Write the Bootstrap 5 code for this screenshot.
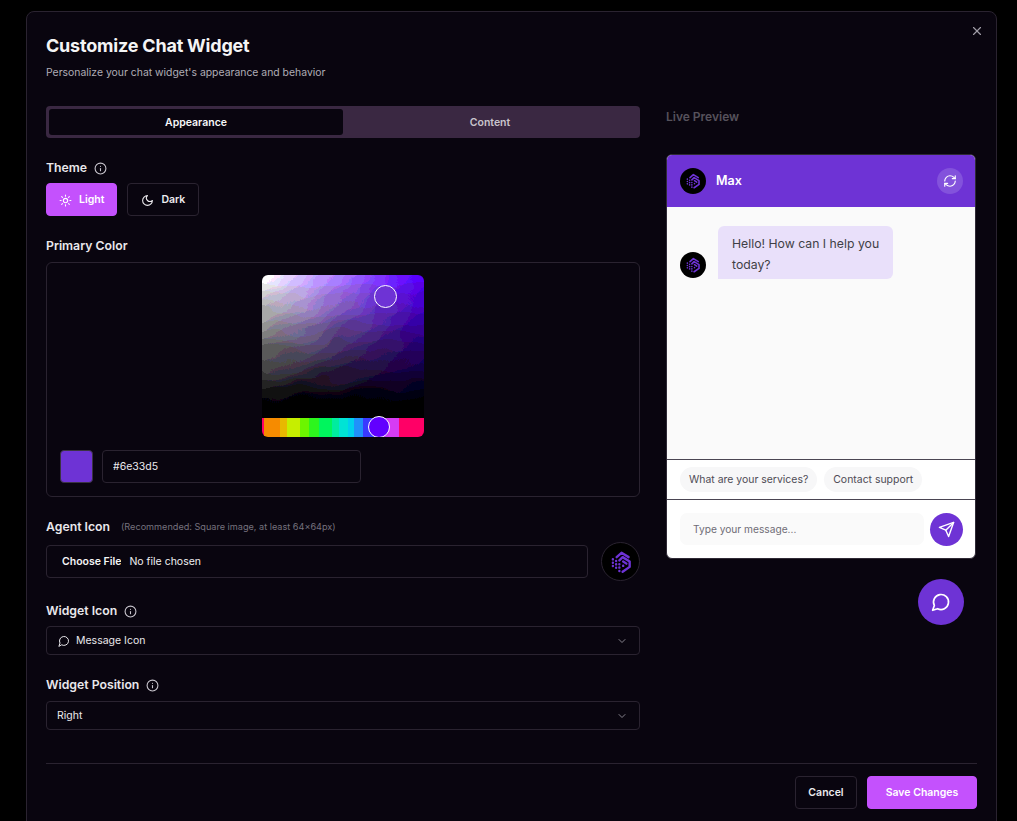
<!DOCTYPE html>
<html lang="en">
<head>
    <meta charset="UTF-8">
    <meta name="viewport" content="width=device-width, initial-scale=1.0">
    <title>Customize Chat Widget</title>
    <link href="https://cdn.jsdelivr.net/npm/bootstrap@5.3.0/dist/css/bootstrap.min.css" rel="stylesheet">
    <style>
        html, body { height: 100%; overflow: hidden; }
        body { background: #000; font-family: Inter, "Liberation Sans", sans-serif; color: #f4f4f5; padding: 11px 20px 0 26px; }
        svg.ico { fill: none; stroke: currentColor; stroke-width: 2; stroke-linecap: round; stroke-linejoin: round; flex: none; }
        .dlg { position: relative; width: 971px; height: 830px; background: #09050f; border: 1px solid #2a2330; border-radius: 8px; padding: 19px; }
        .dlg-close { position: absolute; top: 12px; right: 12px; width: 14px; height: 14px; padding: 0; background: none; border: 0; color: #a09ca6; line-height: 0; }
        .dlg-title { font-size: 18px; line-height: 28px; font-weight: 700; margin: 0; letter-spacing: -.2px; margin-top: 1px; }
        .dlg-sub { font-size: 10.42px; line-height: 16px; color: #b0adb6; margin: 5px 0 0; }
        .dlg-main { display: grid; grid-template-columns: 594px 311px; column-gap: 26px; margin-top: 25px; }
        .tabs-bar { display: flex; height: 32px; padding: 3px; background: #3a2842; border-radius: 4px; }
        .tab-item { flex: 1; border: 0; background: none; border-radius: 3px; color: #c9c4cd; font-size: 10.5px; font-weight: 600; padding: 1px 0 0; }
        .tab-item.on { background: #09050f; color: #f7f7f8; }
        .fld-label { display: flex; align-items: center; gap: 7px; font-size: 12.25px; line-height: 18px; font-weight: 600; color: #e9e8ec; margin: 0; }
        .fld-label svg { color: #c9c6ce; }
        .fld-note { font-size: 9.15px; font-weight: 400; color: #76727e; margin-left: 4px; }
        .lbl-theme { margin-top: 21px; }
        .lbl-color { margin-top: 21px; }
        .lbl-agent { margin-top: 21px; }
        .lbl-widget { margin-top: 21px; }
        .lbl-pos { margin-top: 21px; }
        .theme-row { display: flex; gap: 10px; margin-top: 6px; }
        .theme-btn { display: inline-flex; align-items: center; gap: 7px; height: 33px; padding: 1px 12px 0; font-size: 10.5px; font-weight: 600; border-radius: 4px; border: 1px solid #2a2330; background: transparent; color: #eceaee; }
        .theme-btn.dark-opt { padding: 1px 13px 0; }
        .theme-btn.on { background: #c451fd; border-color: #c451fd; color: #fff; }
        .color-box { height: 235px; margin-top: 7px; border: 1px solid #2a2330; border-radius: 6px; padding: 12px 13px; }
        .picker { position: relative; width: 162px; height: 162px; margin: 0 auto; border-radius: 6px; overflow: hidden; background: #000; }
        .picker-sat { height: 161px; margin: -14px; background: linear-gradient(to bottom, transparent 14px, #000 147px), linear-gradient(to right, #fff 14px, #6200ff 176px); filter: url(#posterize); }
        .picker-hue { position: absolute; left: 0; right: 0; bottom: 0; height: 19px;
            background: linear-gradient(to right, #ff0066 1%, #f68b00 1%, #f68b00 11%, #e8b800 11%, #e8b800 15.5%, #c6ee00 15.5%, #c6ee00 23.5%, #6cf500 23.5%, #6cf500 29%, #2df51d 29%, #2df51d 35%, #00f55d 35%, #00f55d 43%, #00ec9f 43%, #00ec9f 47.5%, #00e3d5 47.5%, #00e3d5 53%, #00cfee 53%, #00cfee 56.5%, #2090fb 56.5%, #2090fb 62.5%, #3a3aff 62.5%, #3a3aff 70%, #a03cf8 70%, #d63cf4 79%, #d63cf4 84.5%, #ff0066 84.5%); }
        .knob { position: absolute; border: 1px solid #fff; border-radius: 50%; }
        .knob-sat { left: 112px; top: 10px; width: 23px; height: 23px; background: #6e33d5; }
        .knob-hue { left: 106px; top: 141px; width: 22px; height: 22px; background: #6200ff; }
        .hex-row { display: flex; align-items: center; gap: 9px; margin-top: 13px; }
        .swatch { width: 33px; height: 33px; border: 1px solid #3b3343; border-radius: 4px; background: #6e33d5; }
        .hex-input, .hex-input:focus { width: 259px; height: 33px; padding: 0 10px; font-size: 10.5px; background: transparent; color: #eceaee; border: 1px solid #2a2330; border-radius: 4px; box-shadow: none; }
        .file-row { display: flex; align-items: center; gap: 13px; margin-top: 6px; }
        .file-input { height: 33px; padding: 0 10px 0 15px; font-size: 10.5px; line-height: 31px; background: transparent !important; color: #f0eff2 !important; border: 1px solid #2a2330; border-radius: 4px; }
        .file-input::file-selector-button { height: 31px; padding: 0; margin: 0 8px 0 0; background: transparent !important; color: #f4f4f5 !important; border: 0; font-weight: 600; font-size: 10.5px; }
        .logo { display: flex; align-items: center; justify-content: center; border-radius: 50%; background: #000; flex: none; }
        .logo-lg { width: 39px; height: 39px; border: 1px solid #2a2330; }
        .logo-sm { width: 26px; height: 26px; }
        .sel-box { display: flex; align-items: center; width: 100%; height: 29px; margin-top: 7px; padding: 0 10px; font-size: 10.5px; color: #e9e8ec; background: transparent; border: 1px solid #2a2330; border-radius: 4px; text-align: left; }
        .lbl-widget + .sel-box { margin-top: 6px; }
        .sel-box .sel-ico { margin: 0 6px 0 1px; }
        .sel-box .chev { margin-left: auto; margin-right: 1px; color: #85828c; }
        .preview-title { font-size: 12px; line-height: 18px; font-weight: 600; color: #56525c; margin: 2px 0 0; }
        .chat { width: 310px; height: 405px; margin-top: 28px; background: #fff; border-radius: 6px; overflow: hidden; display: flex; flex-direction: column; border: 1px solid #2f2a36; }
        .chat-head { height: 52px; flex: none; background: #6e33d5; padding: 0 12px 0 13px; display: flex; align-items: center; gap: 10px; color: #fff; font-size: 12.5px; font-weight: 600; }
        .chat-refresh { margin-left: auto; width: 26px; height: 26px; border: 0; padding: 0; border-radius: 50%; background: #8352dc; color: #fff; display: flex; align-items: center; justify-content: center; }
        .chat-msgs { flex: 1; background: #fafafa; padding: 19px 13px; border-bottom: 1px solid #4a4552; }
        .chat-msgs-in { display: flex; align-items: flex-end; gap: 12px; }
        .chat-msgs-in .logo { margin-bottom: 1px; }
        .bubble { width: 175px; height: 53px; padding: 7px 8px 5px 14px; font-size: 12.25px; line-height: 21px; color: #3f3f46; background: #e9e0fa; border-radius: 6px 6px 6px 0; }
        .chips { height: 40px; flex: none; display: flex; align-items: center; gap: 7px; padding: 0 13px; border-bottom: 1px solid #4a4552; }
        .chip-btn { height: 25px; padding: 0 9px; font-size: 10.45px; color: #4f4c56; background: #f7f7f8; border: 0; border-radius: 13px; }
        .chat-foot { height: 58px; flex: none; display: flex; align-items: center; gap: 6px; padding: 0 12px 0 13px; }
        .chat-input, .chat-input:focus { flex: 1; min-width: 0; height: 32px; padding: 0 13px; font-size: 10.2px; background: #fafafa; border: 0; border-radius: 7px; box-shadow: none; }
        .chat-input::placeholder { color: #6f6c76; }
        .chat-send { width: 33px; height: 33px; padding: 0; border: 0; border-radius: 50%; background: #6e33d5; color: #fff; display: flex; align-items: center; justify-content: center; flex: none; }
        .chat-fab { width: 46px; height: 46px; margin: 20px 13px 0 auto; padding: 0; border: 0; border-radius: 50%; background: #6e33d5; color: #fff; display: flex; align-items: center; justify-content: center; }
        .dlg-foot { margin-top: 33px; padding-top: 12px; border-top: 1px solid #2a2330; display: flex; justify-content: flex-end; gap: 10px; }
        .act-btn { height: 33px; font-size: 10.5px; font-weight: 600; border-radius: 4px; border: 1px solid #2a2330; background: transparent; color: #eceaee; padding: 0; width: 62px; }
        .act-btn.save { width: 110px; background: #c451fd; border-color: #c451fd; color: #fff; }
    </style>
</head>
<body>
    <svg width="0" height="0" class="position-absolute">
        <defs>
            <filter id="posterize" x="0" y="0" width="100%" height="100%" color-interpolation-filters="sRGB">
                <feTurbulence type="fractalNoise" baseFrequency="0.025 0.05" numOctaves="2" seed="4" result="noise"/>
                <feDisplacementMap in="SourceGraphic" in2="noise" scale="20" xChannelSelector="R" yChannelSelector="G" result="moved"/>
                <feComponentTransfer in="moved">
                    <feFuncR type="discrete" tableValues="0 .07 .14 .21 .28 .35 .42 .5 .58 .66 .74 .82 .9 1"/>
                    <feFuncG type="discrete" tableValues="0 .07 .14 .21 .28 .35 .42 .5 .58 .66 .74 .82 .9 1"/>
                    <feFuncB type="discrete" tableValues="0 .07 .14 .21 .28 .35 .42 .5 .58 .66 .74 .82 .9 1"/>
                </feComponentTransfer>
            </filter>
            <symbol id="i-info" viewBox="0 0 24 24"><circle cx="12" cy="12" r="10"/><path d="M12 16v-4"/><path d="M12 8h.01"/></symbol>
            <symbol id="i-msg" viewBox="0 0 24 24"><path d="M7.9 20A9 9 0 1 0 4 16.1L2 22Z"/></symbol>
            <symbol id="i-chev" viewBox="0 0 24 24"><path d="m6 9 6 6 6-6"/></symbol>
            <symbol id="i-logo" viewBox="0 0 24 24">
                <g fill="none" stroke="#6e33d5" stroke-width="2.2" stroke-linecap="round" stroke-linejoin="round">
                    <path d="M8 7.5 12.5 3.5 19 7.5"/>
                    <path d="M10.5 10.5 13.5 7.5 20 11.5V16.5L13.5 21"/>
                    <path d="M14 11.5 17 13.5"/>
                    <path d="M4.5 9.5V18" stroke-dasharray=".1 3"/>
                    <path d="M7.5 11V20" stroke-dasharray=".1 3"/>
                    <path d="M10.5 14V23" stroke-dasharray=".1 3"/>
                    <path d="M14 15.5V18" stroke-dasharray=".1 3"/>
                </g>
            </symbol>
        </defs>
    </svg>

    <div class="dlg">
        <button class="dlg-close" type="button" aria-label="Close">
            <svg class="ico" width="14" height="14" viewBox="0 0 24 24"><path d="M18 6 6 18"/><path d="m6 6 12 12"/></svg>
        </button>
        <h2 class="dlg-title">Customize Chat Widget</h2>
        <p class="dlg-sub">Personalize your chat widget's appearance and behavior</p>

        <div class="dlg-main">
            <!-- Settings column -->
            <div>
                <div class="tabs-bar">
                    <button class="tab-item on" type="button">Appearance</button>
                    <button class="tab-item" type="button">Content</button>
                </div>

                <label class="fld-label lbl-theme">Theme <svg class="ico" width="13" height="13"><use href="#i-info"/></svg></label>
                <div class="theme-row">
                    <button class="theme-btn on" type="button">
                        <svg class="ico" width="13" height="13" viewBox="0 0 24 24"><circle cx="12" cy="12" r="4"/><path d="M12 2v2"/><path d="M12 20v2"/><path d="m4.93 4.93 1.41 1.41"/><path d="m17.66 17.66 1.41 1.41"/><path d="M2 12h2"/><path d="M20 12h2"/><path d="m6.34 17.66-1.41 1.41"/><path d="m19.07 4.93-1.41 1.41"/></svg>
                        Light
                    </button>
                    <button class="theme-btn dark-opt" type="button">
                        <svg class="ico" width="13" height="13" viewBox="0 0 24 24"><path d="M12 3a6 6 0 0 0 9 9 9 9 0 1 1-9-9Z"/></svg>
                        Dark
                    </button>
                </div>

                <label class="fld-label lbl-color">Primary Color</label>
                <div class="color-box">
                    <div class="picker">
                        <div class="picker-sat"></div>
                        <div class="picker-hue"></div>
                        <div class="knob knob-sat"></div>
                        <div class="knob knob-hue"></div>
                    </div>
                    <div class="hex-row">
                        <div class="swatch"></div>
                        <input class="form-control hex-input" type="text" value="#6e33d5">
                    </div>
                </div>

                <label class="fld-label lbl-agent">Agent Icon <span class="fld-note">(Recommended: Square image, at least 64x64px)</span></label>
                <div class="file-row">
                    <input class="form-control file-input flex-grow-1" type="file">
                    <span class="logo logo-lg"><svg width="26" height="26"><use href="#i-logo"/></svg></span>
                </div>

                <label class="fld-label lbl-widget">Widget Icon <svg class="ico" width="13" height="13"><use href="#i-info"/></svg></label>
                <button class="sel-box" type="button">
                    <svg class="ico sel-ico" width="12" height="12"><use href="#i-msg"/></svg>
                    Message Icon
                    <svg class="ico chev" width="12" height="12"><use href="#i-chev"/></svg>
                </button>

                <label class="fld-label lbl-pos">Widget Position <svg class="ico" width="13" height="13"><use href="#i-info"/></svg></label>
                <button class="sel-box" type="button">
                    Right
                    <svg class="ico chev" width="12" height="12"><use href="#i-chev"/></svg>
                </button>
            </div>

            <!-- Live preview column -->
            <div>
                <p class="preview-title">Live Preview</p>
                <div class="chat">
                    <div class="chat-head">
                        <span class="logo logo-sm"><svg width="18" height="18"><use href="#i-logo"/></svg></span>
                        Max
                        <button class="chat-refresh" type="button">
                            <svg class="ico" width="14" height="14" viewBox="0 0 24 24"><path d="M3 12a9 9 0 0 1 9-9 9.75 9.75 0 0 1 6.74 2.74L21 8"/><path d="M21 3v5h-5"/><path d="M21 12a9 9 0 0 1-9 9 9.75 9.75 0 0 1-6.74-2.74L3 16"/><path d="M8 16H3v5"/></svg>
                        </button>
                    </div>
                    <div class="chat-msgs">
                        <div class="chat-msgs-in">
                            <span class="logo logo-sm"><svg width="18" height="18"><use href="#i-logo"/></svg></span>
                            <div class="bubble">Hello! How can I help you today?</div>
                        </div>
                    </div>
                    <div class="chips">
                        <button class="chip-btn" type="button">What are your services?</button>
                        <button class="chip-btn" type="button">Contact support</button>
                    </div>
                    <div class="chat-foot">
                        <input class="form-control chat-input" type="text" placeholder="Type your message...">
                        <button class="chat-send" type="button">
                            <svg class="ico" width="17" height="17" viewBox="0 0 24 24"><path d="m22 2-7 20-4-9-9-4Z"/><path d="M22 2 11 13"/></svg>
                        </button>
                    </div>
                </div>
                <button class="chat-fab" type="button">
                    <svg class="ico" width="20" height="20"><use href="#i-msg"/></svg>
                </button>
            </div>
        </div>

        <div class="dlg-foot">
            <button class="act-btn" type="button">Cancel</button>
            <button class="act-btn save" type="button">Save Changes</button>
        </div>
    </div>
    <script src="https://cdn.jsdelivr.net/npm/bootstrap@5.3.0/dist/js/bootstrap.bundle.min.js"></script>
</body>
</html>
